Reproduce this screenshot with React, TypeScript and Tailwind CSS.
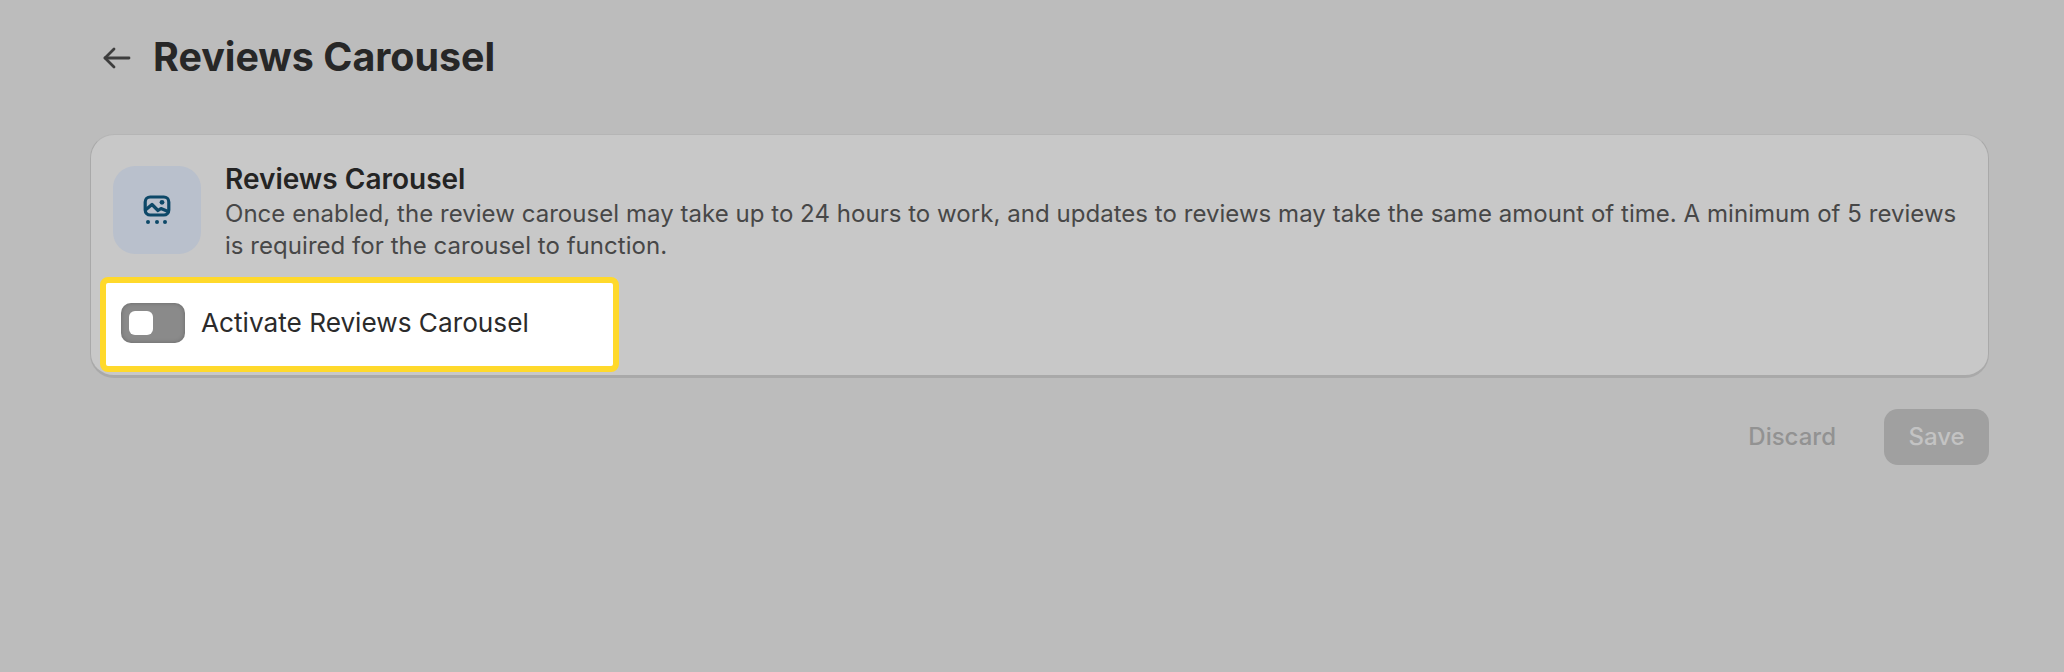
export default function App() {
  return (
    <div className="min-h-[672px] bg-[#bcbcbc] pl-[90px] pr-[75px] font-['Inter',sans-serif]">
      <header className="flex h-[115px] items-center pl-[13px]">
        <svg className="h-[28px] w-[28px] text-[#3d3d3d]" viewBox="0 0 28 28" fill="none" stroke="currentColor" strokeWidth="2.8" strokeLinecap="round" strokeLinejoin="round">
          <path d="M26 14H2" />
          <path d="M11 5l-9 9 9 9" />
        </svg>
        <h1 className="ml-[22px] text-[39.4px] font-bold text-[#272727]">Reviews Carousel</h1>
      </header>

      <section className="mt-[19px] h-[244px] rounded-[24px] border-b-[3px] border-l border-r border-t border-b-[#a9a9a9] border-l-[#a9a9a9] border-r-[#a9a9a9] border-t-[#b5b5b5] bg-[#c8c8c8] px-[22px] pt-[31px]">
        <div className="flex gap-[24px]">
          <div className="flex h-[88px] w-[88px] shrink-0 items-center justify-center rounded-[22px] bg-[#b9c0cc]">
            <svg className="h-[32px] w-[32px] text-[#0d4868]" viewBox="0 0 32 32" fill="none" stroke="currentColor" strokeWidth="3.2" strokeLinecap="round" strokeLinejoin="round">
              <rect x="4.2" y="3" width="23.6" height="18" rx="5" />
              <path d="M5 15.5l6-5 6 6 3-2 7 3" />
              <circle cx="21" cy="8.3" r="2.4" fill="currentColor" stroke="none" />
              <circle cx="7" cy="28" r="2" fill="currentColor" stroke="none" />
              <circle cx="16" cy="28" r="2" fill="currentColor" stroke="none" />
              <circle cx="24" cy="28" r="2" fill="currentColor" stroke="none" />
            </svg>
          </div>
          <div className="-mt-[5px]">
            <h2 className="text-[28px] leading-[36px] font-semibold text-[#242424]">Reviews Carousel</h2>
            <p className="mt-[1px] text-[24px] leading-[32px] tracking-[0.04px] text-[#474747]">
              Once enabled, the review carousel may take up to 24 hours to work, and updates to reviews may take the same amount of time. A minimum of 5 reviews is required for the carousel to function.
            </p>
          </div>
        </div>

        <label className="-ml-[13px] mt-[15px] flex h-[95px] w-[519px] items-center gap-[16px] rounded-[8px] border-[6px] border-[#ffd92b] bg-white pb-[3px] pl-[15px]">
          <span className="flex h-[40px] w-[64px] items-center rounded-[10px] bg-[#8a8a8a] pl-[8px] shadow-[inset_0_0_4px_rgba(0,0,0,0.25)]">
            <span className="h-[24px] w-[24px] rounded-[6px] bg-white" />
          </span>
          <span className="text-[26.2px] text-[#2b2b2b]">Activate Reviews Carousel</span>
        </label>
      </section>

      <div className="mt-[31px] flex items-center justify-end gap-[48px]">
        <button className="text-[24px] font-medium text-[#929292]">Discard</button>
        <button className="h-[56px] w-[105px] rounded-[14px] bg-[#a0a0a0] text-[24px] font-medium text-[#c3c3c3]">Save</button>
      </div>
    </div>
  );
}
